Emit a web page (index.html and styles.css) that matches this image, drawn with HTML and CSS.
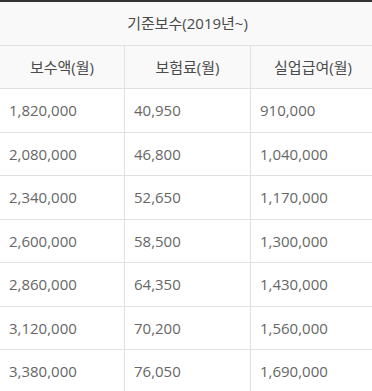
FILE: index.html
```html
<!DOCTYPE html>
<html lang="ko">
<head>
<meta charset="utf-8">
<link rel="stylesheet" href="styles.css">
</head>
<body>
<table class="pay">
  <colgroup>
    <col class="c1"><col class="c2"><col class="c3">
  </colgroup>
  <thead>
    <tr><th colspan="3">기준보수(2019년~)</th></tr>
    <tr><th>보수액(월)</th><th>보험료(월)</th><th>실업급여(월)</th></tr>
  </thead>
  <tbody>
    <tr><td>1,820,000</td><td>40,950</td><td>910,000</td></tr>
    <tr><td>2,080,000</td><td>46,800</td><td>1,040,000</td></tr>
    <tr><td>2,340,000</td><td>52,650</td><td>1,170,000</td></tr>
    <tr><td>2,600,000</td><td>58,500</td><td>1,300,000</td></tr>
    <tr><td>2,860,000</td><td>64,350</td><td>1,430,000</td></tr>
    <tr><td>3,120,000</td><td>70,200</td><td>1,560,000</td></tr>
    <tr><td>3,380,000</td><td>76,050</td><td>1,690,000</td></tr>
  </tbody>
</table>
</body>
</html>
```

FILE: styles.css
```css
html, body {
  margin: 0;
  padding: 0;
  background: #fff;
  overflow: hidden;
}

.pay {
  border-collapse: collapse;
  table-layout: fixed;
  width: 376px;
  margin-left: -1px;
  border-top: 2px solid #333;
  font-family: "Open Sans", "Noto Sans CJK KR", sans-serif;
  font-size: 15px;
  color: #555;
}

.c1 { width: 125px; }
.c2 { width: 126px; }
.c3 { width: 125px; }

.pay th,
.pay td {
  border: 1px solid #e1e1e1;
  padding: 11px 9px;
  line-height: 20.5px;
  white-space: nowrap;
}

.pay th {
  background: #f9f9f9;
  font-weight: normal;
  text-align: center;
  color: #4a4a4a;
}

.pay td {
  text-align: left;
  color: #666;
}
```
